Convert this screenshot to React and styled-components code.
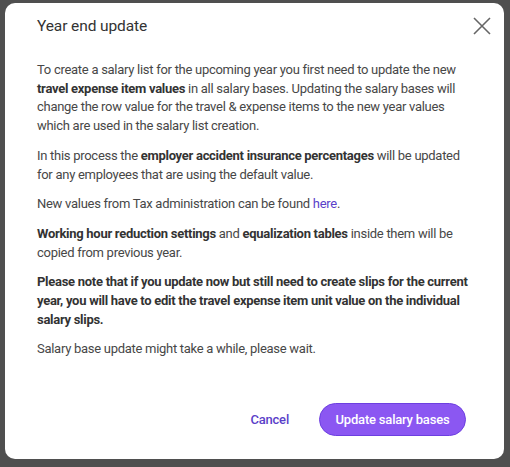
import React from "react";
import styled, { createGlobalStyle } from "styled-components";

const Global = createGlobalStyle`
  html, body { margin: 0; padding: 0; }
  body { background: #4f4f4f; font-family: "Roboto", "Noto Sans", sans-serif; }
`;

const Backdrop = styled.div`
  width: 510px;
  height: 467px;
  box-sizing: border-box;
  padding: 3px 6px 8px 5px;
  background: #4f4f4f;
`;

const Modal = styled.div`
  height: 456px;
  box-sizing: border-box;
  background: #fff;
  border-radius: 10px;
  display: flex;
  flex-direction: column;
  padding: 0 32px;
  position: relative;
`;

const Header = styled.div`
  display: flex;
  align-items: center;
  height: 46px;
`;

const Title = styled.h2`
  margin: 0;
  font-size: 15.5px;
  font-weight: 400;
  color: #333;
  letter-spacing: -0.1px;
`;

const Close = styled.button`
  position: absolute;
  top: 11px;
  right: 10px;
  width: 24px;
  height: 24px;
  padding: 0;
  border: 0;
  background: none;
  display: flex;
  align-items: center;
  justify-content: center;
`;

const Body = styled.div`
  padding-top: 12px;
  flex: 1;
  width: 432px;
`;

const P = styled.p`
  margin: 0 0 11px;
  font-size: 13px;
  line-height: 18.7px;
  letter-spacing: -0.28px;
  color: #474747;
  b { font-weight: 700; color: #333; }
`;

const Link = styled.a`
  color: #5b3fc9;
  text-decoration: none;
`;

const Footer = styled.div`
  display: flex;
  justify-content: flex-end;
  align-items: center;
  gap: 30px;
  padding-bottom: 23px;
  padding-right: 6px;
`;

const TextButton = styled.button`
  border: 0;
  background: none;
  font-family: inherit;
  font-size: 13px;
  font-weight: 500;
  color: #5b3fc9;
  padding: 0;
  letter-spacing: -0.2px;
`;

const Primary = styled.button`
  width: 147px;
  height: 33px;
  border-radius: 17px;
  border: 1px solid #6d3fe0;
  background: #8b57f2;
  color: #fff;
  font-family: inherit;
  font-size: 13px;
  font-weight: 500;
  letter-spacing: -0.2px;
`;

export default function App() {
  return (
    <>
      <Global />
      <Backdrop>
        <Modal>
          <Header>
            <Title>Year end update</Title>
          </Header>
          <Close aria-label="Close">
            <svg width="18" height="18" viewBox="0 0 18 18">
              <path d="M1 1 L17 17 M17 1 L1 17" stroke="#666" strokeWidth="1.6" fill="none" />
            </svg>
          </Close>
          <Body>
            <P>
              To create a salary list for the upcoming year you first need to update the new{" "}
              <b>travel expense item values</b> in all salary bases. Updating the salary bases will
              change the row value for the travel &amp; expense items to the new year values which
              are used in the salary list creation.
            </P>
            <P>
              In this process the <b>employer accident insurance percentages</b> will be updated for
              any employees that are using the default value.
            </P>
            <P>
              New values from Tax administration can be found <Link href="#">here</Link>.
            </P>
            <P>
              <b>Working hour reduction settings</b> and <b>equalization tables</b> inside them will
              be copied from previous year.
            </P>
            <P>
              <b>
                Please note that if you update now but still need to create slips for the current
                year, you will have to edit the travel expense item unit value on the individual
                salary slips.
              </b>
            </P>
            <P>Salary base update might take a while, please wait.</P>
          </Body>
          <Footer>
            <TextButton>Cancel</TextButton>
            <Primary>Update salary bases</Primary>
          </Footer>
        </Modal>
      </Backdrop>
    </>
  );
}
